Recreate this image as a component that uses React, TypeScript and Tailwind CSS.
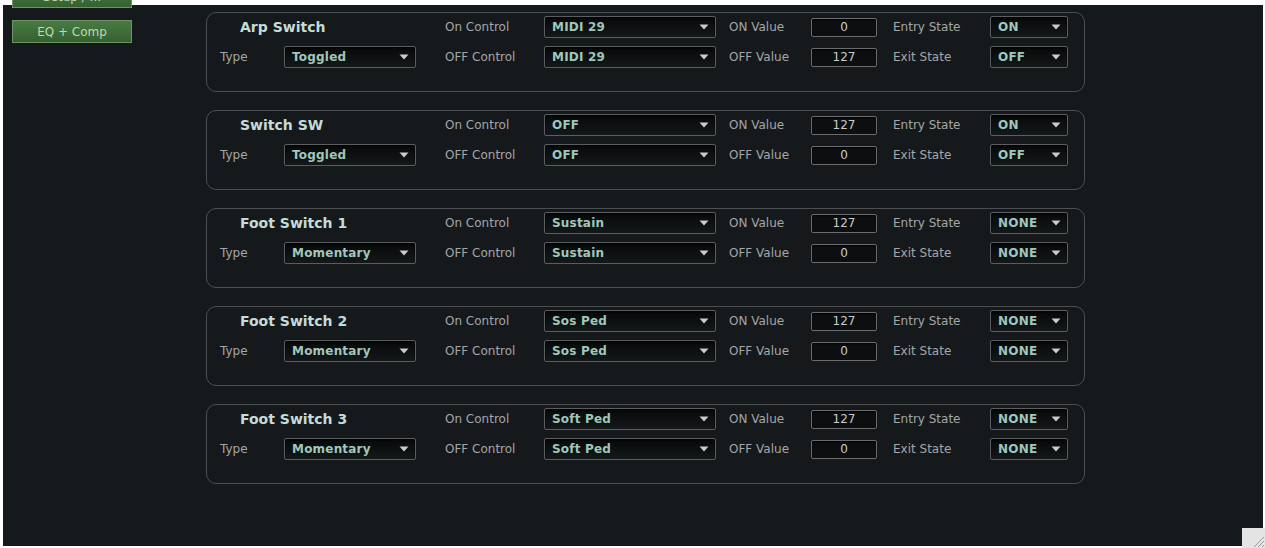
const font = { fontFamily: '"DejaVu Sans", Verdana, sans-serif' }

type Row = {
  title: string
  type: string
  onCtl: string
  offCtl: string
  onVal: string
  offVal: string
  entry: string
  exit: string
}

const rows: Row[] = [
  { title: 'Arp Switch', type: 'Toggled', onCtl: 'MIDI 29', offCtl: 'MIDI 29', onVal: '0', offVal: '127', entry: 'ON', exit: 'OFF' },
  { title: 'Switch SW', type: 'Toggled', onCtl: 'OFF', offCtl: 'OFF', onVal: '127', offVal: '0', entry: 'ON', exit: 'OFF' },
  { title: 'Foot Switch 1', type: 'Momentary', onCtl: 'Sustain', offCtl: 'Sustain', onVal: '127', offVal: '0', entry: 'NONE', exit: 'NONE' },
  { title: 'Foot Switch 2', type: 'Momentary', onCtl: 'Sos Ped', offCtl: 'Sos Ped', onVal: '127', offVal: '0', entry: 'NONE', exit: 'NONE' },
  { title: 'Foot Switch 3', type: 'Momentary', onCtl: 'Soft Ped', offCtl: 'Soft Ped', onVal: '127', offVal: '0', entry: 'NONE', exit: 'NONE' },
]

function Select({ value, width }: { value: string; width: string }) {
  return (
    <div
      className={`${width} h-[22px] flex items-center justify-between pl-[7px] pr-[6px] rounded-[2px] border border-[#5b5e60] bg-gradient-to-b from-[#070909] to-[#15181a] shadow-[inset_0_1px_2px_rgba(0,0,0,0.8)]`}
    >
      <span className="text-[12px] font-bold text-[#9fc7bb] tracking-[0.2px]">{value}</span>
      <svg width="10" height="6" viewBox="0 0 10 6">
        <path d="M0.5 0.5 L9.5 0.5 L5 5.5 Z" fill="#c9cccc" />
      </svg>
    </div>
  )
}

function ValueBox({ value }: { value: string }) {
  return (
    <div className="w-[66px] h-[19px] flex items-center justify-center rounded-[2px] border border-[#6a6c6e] bg-[#0c0e0f] shadow-[inset_0_1px_2px_rgba(0,0,0,0.9)]">
      <span className="text-[12px] text-[#c9cbcb]">{value}</span>
    </div>
  )
}

function Label({ children, className }: { children: string; className: string }) {
  return <span className={`${className} text-[12px] text-[#a4a6a7]`}>{children}</span>
}

function SwitchPanel({ r }: { r: Row }) {
  return (
    <div className="w-[879px] h-[80px] rounded-[10px] border-[1.5px] border-[#4c4f52] pl-[13px] pt-[3px] flex flex-col gap-[8px]">
      <div className="flex items-center h-[22px]">
        <span className="w-[196px] pl-[20px] text-[14px] font-bold text-[#c3dcd7]">{r.title}</span>
        <Label className="ml-[29px] w-[99px]">On Control</Label>
        <Select value={r.onCtl} width="w-[172px]" />
        <Label className="ml-[13px] w-[82px]">ON Value</Label>
        <ValueBox value={r.onVal} />
        <Label className="ml-[16px] w-[97px]">Entry State</Label>
        <Select value={r.entry} width="w-[78px]" />
      </div>
      <div className="flex items-center h-[22px]">
        <Label className="w-[64px]">Type</Label>
        <Select value={r.type} width="w-[132px]" />
        <Label className="ml-[29px] w-[99px]">OFF Control</Label>
        <Select value={r.offCtl} width="w-[172px]" />
        <Label className="ml-[13px] w-[82px]">OFF Value</Label>
        <ValueBox value={r.offVal} />
        <Label className="ml-[16px] w-[97px]">Exit State</Label>
        <Select value={r.exit} width="w-[78px]" />
      </div>
    </div>
  )
}

function GreenButton({ label }: { label: string }) {
  return (
    <div className="w-[120px] h-[23px] flex items-center justify-center border border-[#6d9466] bg-gradient-to-b from-[#4a7a43] to-[#35612f] text-[12px] text-[#bcd9b4]">
      {label}
    </div>
  )
}

export default function App() {
  return (
    <div className="relative w-[1265px] h-[548px] bg-white pt-[5px] pl-[3px] pr-[2px] pb-[2px] overflow-hidden" style={font}>
      <div className="h-full bg-[#16191c] flex">
        <div className="pl-[9px] -mt-[20px] flex flex-col gap-[12px]">
          <GreenButton label="Setup / ..." />
          <GreenButton label="EQ + Comp" />
        </div>
        <div className="ml-[74px] pt-[7px] flex flex-col gap-[18px]">
          {rows.map((r) => (
            <SwitchPanel key={r.title} r={r} />
          ))}
        </div>
      </div>
      <div className="absolute right-0 bottom-0 w-[23px] h-[20px] bg-[#e4e4e4] flex items-end justify-end">
        <svg width="14" height="14" viewBox="0 0 14 14">
          <path d="M13 3 L3 13 M13 7 L7 13 M13 11 L11 13" stroke="#9a9a9a" strokeWidth="1" />
        </svg>
      </div>
    </div>
  )
}
